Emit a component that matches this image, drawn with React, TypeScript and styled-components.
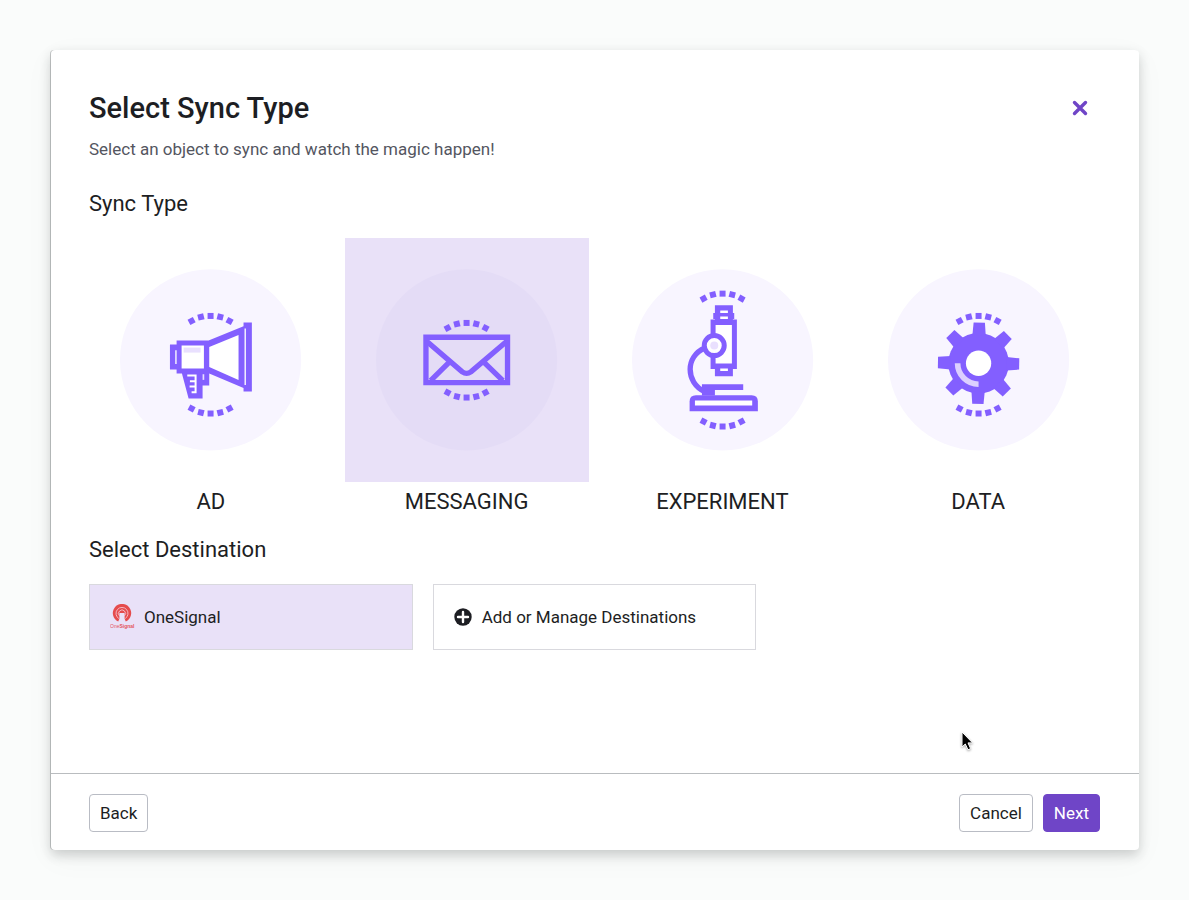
import React, { useState } from "react";
import styled, { createGlobalStyle } from "styled-components";

const colors = {
  page: "#fafcfb",
  ink: "#1d1e23",
  muted: "#54565f",
  brand: "#6f45c7",
  icon: "#835fff",
  tint: "#e9e1f8",
  disc: "#f8f5ff",
  discSelected: "#e4dcf6",
  highlight: "#e9e0fe",
  border: "#d9d9de",
};

const GlobalStyle = createGlobalStyle`
  *, *::before, *::after { box-sizing: border-box; }
  body {
    margin: 0;
    background: ${colors.page};
    color: ${colors.ink};
    font-family: Roboto, "Liberation Sans", sans-serif;
    font-size: 17px;
    line-height: 24px;
  }
  button { font: inherit; color: inherit; cursor: pointer; }
`;

const Page = styled.div`
  min-height: 100vh;
  padding: 50px 50px 50px 51px;
  display: flex;
`;

const Dialog = styled.section`
  flex: 1;
  min-width: 0;
  display: flex;
  flex-direction: column;
  background: #fff;
  border-radius: 4px;
  box-shadow: -1px 0 0 rgba(40, 44, 46, 0.25), 0 5px 12px rgba(30, 34, 36, 0.2),
    0 8px 32px rgba(30, 34, 36, 0.04);
`;

const Content = styled.div`
  flex: 1;
  padding: 40px 39px 40px 38px;
`;

const Header = styled.header`
  display: flex;
  justify-content: space-between;
  align-items: flex-start;
`;

const Title = styled.h1`
  margin: 0;
  font-size: 29px;
  line-height: 36px;
  font-weight: 500;
`;

const Subtitle = styled.p`
  margin: 11px 0 0;
  color: ${colors.muted};
`;

const CloseButton = styled.button`
  width: 40px;
  height: 35px;
  padding: 0;
  display: grid;
  place-items: center;
  border: 0;
  background: none;
  color: ${colors.brand};
`;

const SectionTitle = styled.h2`
  margin: 28px 0 19px;
  font-size: 22px;
  line-height: 30px;
  font-weight: 400;
`;

const TypeGrid = styled.div`
  display: grid;
  grid-template-columns: repeat(4, 1fr);
  gap: 12px;
`;

const TypeOption = styled.button`
  padding: 0;
  border: 0;
  background: none;
  display: flex;
  flex-direction: column;
  font-size: 22px;
  line-height: 30px;
  gap: 5px;
`;

const Tile = styled.span<{ $selected: boolean }>`
  width: 100%;
  aspect-ratio: 1;
  display: grid;
  place-items: center;
  background: ${(p) => (p.$selected ? colors.tint : "transparent")};
`;

const TypeLabel = styled.span`
  text-align: center;
`;

const TypeArt = styled.svg`
  width: 75%;
  display: block;
`;

const DestinationTitle = styled(SectionTitle)`
  margin: 18px 0 19px;
`;

const DestinationGrid = styled.div`
  display: grid;
  grid-template-columns: repeat(3, 1fr);
  gap: 20px;
`;

const Destination = styled.button<{ $selected?: boolean; $gap: number }>`
  height: 66px;
  padding: 0 20px;
  display: flex;
  align-items: center;
  gap: ${(p) => p.$gap}px;
  border: 1px solid ${colors.border};
  background: ${(p) => (p.$selected ? colors.tint : "#fff")};
`;

const Footer = styled.footer`
  display: flex;
  gap: 10px;
  padding: 20px 39px 18px 38px;
  border-top: 1px solid #b9bcbf;
`;

const FooterButton = styled.button<{ $primary?: boolean }>`
  height: 38px;
  padding: 0 10px;
  border: 1px solid ${(p) => (p.$primary ? colors.brand : "#b9bcc4")};
  border-radius: 4px;
  background: ${(p) => (p.$primary ? colors.brand : "#fff")};
  color: ${(p) => (p.$primary ? "#fff" : colors.ink)};
`;

const BackButton = styled(FooterButton)`
  margin-right: auto;
`;

const Pointer = styled.svg`
  position: absolute;
  left: 959px;
  top: 729px;
  pointer-events: none;
  filter: drop-shadow(0 1px 1px rgba(0, 0, 0, 0.35));
`;

const dotOffsets = [
  { x: -57, drop: 15, turn: -28 },
  { x: -29, drop: 3, turn: -14 },
  { x: 0, drop: 0, turn: 0 },
  { x: 29, drop: 3, turn: 14 },
  { x: 57, drop: 15, turn: 28 },
];

function Dots({ cx, top, bottom }: { cx: number; top: number; bottom: number }) {
  return (
    <g fill={colors.icon}>
      {dotOffsets.map((d) => (
        <React.Fragment key={d.x}>
          <rect x={-9} y={-9} width={18} height={18} transform={`translate(${cx + d.x} ${top + d.drop}) rotate(${d.turn})`} />
          <rect x={-9} y={-9} width={18} height={18} transform={`translate(${cx + d.x} ${bottom - d.drop}) rotate(${-d.turn})`} />
        </React.Fragment>
      ))}
    </g>
  );
}

interface ArtProps {
  cx: number;
  top: number;
  bottom: number;
  selected: boolean;
  children: React.ReactNode;
}

function Art({ cx, top, bottom, selected, children }: ArtProps) {
  return (
    <TypeArt viewBox={`${cx - 275} 25 549 549`} aria-hidden="true">
      <circle cx={cx} cy={301} r={272} fill={selected ? colors.discSelected : colors.disc} />
      <Dots cx={cx} top={top} bottom={bottom} />
      {children}
    </TypeArt>
  );
}

function Megaphone() {
  return (
    <>
      <path fill={colors.icon} d="M181 255H201V243H297L402 200V189H427V396H402V385L299 342V378H279V417H237L217 342H201V330H181Z" />
      <path fill="#fff" d="M216 258H283V327H216ZM299 262L387 226V361L299 322ZM405 207H409V376H405ZM197 272H201V313H197Z" />
      <path fill={colors.highlight} d="M222 264H273V279H222Z" />
      <path fill="none" stroke="#fff" strokeWidth="6" d="M233 348H258V398H246M241 365H258M240 381H258" />
      <path fill={colors.highlight} d="M279 344H284V361H279Z" />
    </>
  );
}

function Envelope() {
  return (
    <g fill="none" stroke={colors.icon} strokeWidth="16">
      <path d="M179 233H424V369H179Z" />
      <path d="M182 246L288 337Q301 346 314 337L421 246M250 307L193 363M352 307L410 363" />
    </g>
  );
}

function Microscope() {
  return (
    <>
      <path fill="none" stroke={colors.icon} strokeWidth="16" d="M249 265C190 289 190 369 248 396" />
      <path fill={colors.icon} d="M279 137H333V160H337V178H333V180H345V328H333V350H279V328H266V180H279V178H274V160H279Z" />
      <path fill="#fff" d="M281 196H330V312H281ZM295 153H318V160H295ZM295 171H318V178H295ZM295 327H318V334H295Z" />
      <circle cx="277" cy="258" r="30" fill="#fff" stroke={colors.icon} strokeWidth="15" />
      <circle cx="277" cy="258" r="12" fill={colors.highlight} />
      <path fill={colors.icon} d="M240 374H364V391H279V408H240Z" />
      <path fill={colors.icon} d="M203 455V426Q203 407 222 407H389Q408 407 408 426V455Z" />
      <path fill="#fff" d="M219 423H391V438H219Z" />
    </>
  );
}

function Gear() {
  return (
    <>
      <g fill={colors.icon} transform="translate(300 311) rotate(1)">
        <circle r="91" />
        {[0, 45, 90, 135, 180, 225, 270, 315].map((a) => (
          <path key={a} d="M-17 -122H17L20 -84H-20Z" transform={`rotate(${a})`} />
        ))}
      </g>
      <circle cx="300" cy="311" r="38" fill="#fff" />
      <path fill="none" stroke="#dccfff" strokeWidth="17" d="M237 311A63 63 0 0 0 300 374" />
    </>
  );
}

const syncTypes = [
  { label: "AD", cx: 303, top: 169, bottom: 462, Icon: Megaphone },
  { label: "MESSAGING", cx: 301, top: 190, bottom: 414, Icon: Envelope },
  { label: "EXPERIMENT", cx: 302, top: 102, bottom: 501, Icon: Microscope },
  { label: "DATA", cx: 300, top: 169, bottom: 462, Icon: Gear },
];

const LogoText = styled.text`
  font-family: "Liberation Sans", sans-serif;
  font-size: 5px;
  fill: #e4555d;
`;

function OneSignalLogo() {
  return (
    <svg width="26" height="26" viewBox="1 0 26 26" aria-hidden="true">
      <path fill="#e54b4d" d="M9.2 17.5A9.2 9.2 0 1 1 16.800 17.500L15.600 14.800V9H10.400V14.800Z" />
      <g fill="none" stroke="#f5c3cf" strokeWidth="0.9">
        <path d="M9.800 14.500A6 6 0 1 1 16.200 14.500" />
        <path d="M10.600 12A3.500 3.500 0 1 1 15.400 12" />
      </g>
      <path fill={colors.tint} d="M11.700 9.500H14.300V18H11.700Z" />
      <LogoText x="1" y="24">One<tspan fontWeight="700">Signal</tspan></LogoText>
    </svg>
  );
}

function PlusCircle() {
  return (
    <svg width="18" height="18" viewBox="0 0 18 18" aria-hidden="true">
      <circle cx="9" cy="9" r="8.700" fill={colors.ink} />
      <path d="M9 4V14M4 9H14" stroke="#fff" strokeWidth="2.400" strokeLinecap="round" />
    </svg>
  );
}

export default function App() {
  const [type, setType] = useState("MESSAGING");

  return (
    <>
      <GlobalStyle />
      <Page>
        <Dialog role="dialog" aria-labelledby="dialog-title">
          <Content>
            <Header>
              <div>
                <Title id="dialog-title">Select Sync Type</Title>
                <Subtitle>Select an object to sync and watch the magic happen!</Subtitle>
              </div>
              <CloseButton aria-label="Close">
                <svg width="16" height="16" viewBox="0 0 16 16" aria-hidden="true">
                  <path d="M2.500 2.500L13.500 13.500M13.500 2.500L2.500 13.500" stroke="currentColor" strokeWidth="3.400" strokeLinecap="round" />
                </svg>
              </CloseButton>
            </Header>

            <SectionTitle>Sync Type</SectionTitle>
            <TypeGrid>
              {syncTypes.map(({ label, cx, top, bottom, Icon }) => (
                <TypeOption key={label} aria-pressed={type === label} onClick={() => setType(label)}>
                  <Tile $selected={type === label}>
                    <Art cx={cx} top={top} bottom={bottom} selected={type === label}>
                      <Icon />
                    </Art>
                  </Tile>
                  <TypeLabel>{label}</TypeLabel>
                </TypeOption>
              ))}
            </TypeGrid>

            <DestinationTitle>Select Destination</DestinationTitle>
            <DestinationGrid>
              <Destination $selected $gap={8} aria-pressed="true">
                <OneSignalLogo />
                OneSignal
              </Destination>
              <Destination $gap={10}>
                <PlusCircle />
                Add or Manage Destinations
              </Destination>
            </DestinationGrid>
          </Content>

          <Footer>
            <BackButton>Back</BackButton>
            <FooterButton>Cancel</FooterButton>
            <FooterButton $primary>Next</FooterButton>
          </Footer>
        </Dialog>
      </Page>
      <Pointer width="18" height="24" viewBox="0 0 18 24" aria-hidden="true">
        <path d="M3 3V18L6.300 15L9 20.800L11.600 19.600L9 13.900H13.600Z" fill="#000" stroke="#fff" strokeWidth="1" />
      </Pointer>
    </>
  );
}
